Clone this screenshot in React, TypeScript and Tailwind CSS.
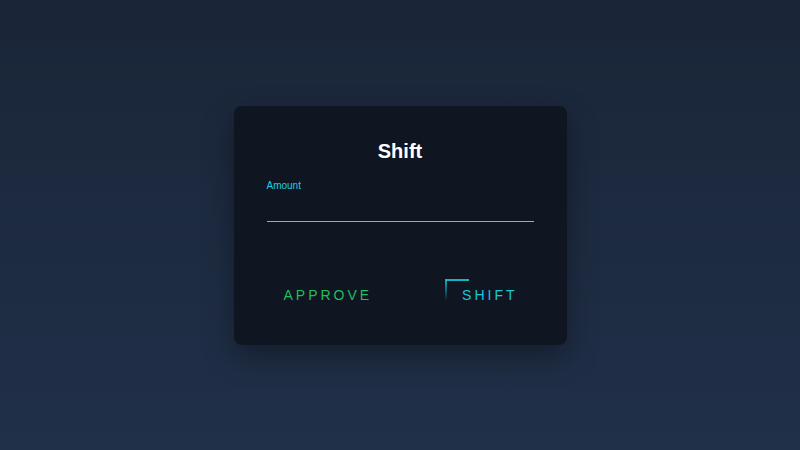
const App = () => {
  return (
    <div className="w-screen h-screen flex items-center justify-center bg-gradient-to-b from-[#1a2537] to-[#203049] font-['Liberation_Sans',Arial,sans-serif]">
      <div className="w-[333px] h-[239px] rounded-lg bg-[#0f1621] px-[33px] pt-[31px] shadow-[0_12px_30px_rgba(0,0,0,0.35)] flex flex-col">
        <h1 className="text-center text-white text-[20px] leading-7 font-bold">Shift</h1>
        <label className="mt-[13px] text-[10px] leading-[15px] text-[#1ccfe0]">Amount</label>
        <input
          type="text"
          className="h-[29px] w-full bg-transparent border-0 border-b border-[#a3a6ad] outline-none text-white text-sm"
        />
        <div className="mt-[57px] flex justify-between">
          <button className="px-[17px] py-[6px] text-[14px] leading-5 tracking-[3px] text-[#1fbf5d]">
            APPROVE
          </button>
          <button className="relative pl-[17px] pr-4 py-[6px] text-[14px] leading-5 tracking-[3px] text-[#16c8dc]">
            <span className="absolute left-0 top-0 w-6 h-[2px] bg-[#14b5c4]" />
            <span className="absolute left-0 top-0 w-[2px] h-[22px] bg-gradient-to-b from-[#14b5c4] to-transparent" />
            SHIFT
          </button>
        </div>
      </div>
    </div>
  );
};

export default App;
